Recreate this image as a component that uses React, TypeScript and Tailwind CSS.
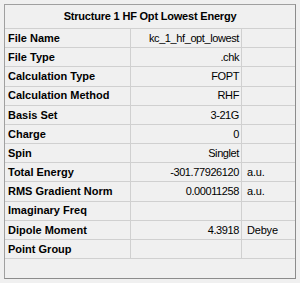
import React from "react";

type Row = {
  label: string;
  value?: string;
  unit?: string;
};

const rows: Row[] = [
  { label: "File Name", value: "kc_1_hf_opt_lowest" },
  { label: "File Type", value: ".chk" },
  { label: "Calculation Type", value: "FOPT" },
  { label: "Calculation Method", value: "RHF" },
  { label: "Basis Set", value: "3-21G" },
  { label: "Charge", value: "0" },
  { label: "Spin", value: "Singlet" },
  { label: "Total Energy", value: "-301.77926120", unit: "a.u." },
  { label: "RMS Gradient Norm", value: "0.00011258", unit: "a.u." },
  { label: "Imaginary Freq" },
  { label: "Dipole Moment", value: "4.3918", unit: "Debye" },
  { label: "Point Group" },
];

export default function App() {
  return (
    <div
      className="w-[300px] h-[283px] bg-[#f0f0f0] p-1 text-[11px] text-black"
      style={{ fontFamily: '"Liberation Sans", Arial, sans-serif' }}
    >
      <div className="h-[275px] border border-[#a0a0a0] border-r-[#8c8c8c] border-b-[#8c8c8c] flex flex-col">
        <div className="h-[24px] shrink-0 border-b border-[#d0d0d0] flex items-center justify-center font-bold tracking-[-0.2px]">
          Structure 1 HF Opt Lowest Energy
        </div>
        <div className="h-[230px] shrink-0 flex flex-col">
          {rows.map((r) => (
            <div key={r.label} className="flex-1 flex border-b border-[#d0d0d0]">
              <div className="w-[126px] shrink-0 border-r border-[#d0d0d0] flex items-center pl-[3px] font-bold">
                {r.label}
              </div>
              <div className="w-[111px] shrink-0 border-r border-[#d0d0d0] flex items-center justify-end pr-[2px] tracking-[-0.4px]">
                {r.value}
              </div>
              <div className="flex-1 flex items-center pl-[5px] tracking-[-0.2px]">{r.unit}</div>
            </div>
          ))}
        </div>
        <div className="flex-1" />
      </div>
    </div>
  );
}
